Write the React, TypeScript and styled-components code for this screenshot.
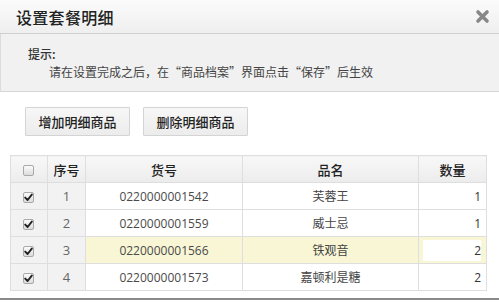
import React from "react";
import styled, { createGlobalStyle, css } from "styled-components";

const GlobalStyle = createGlobalStyle`
  html, body { margin: 0; padding: 0; background: #ffffff; }
  body {
    font-family: "Open Sans", "Noto Sans CJK SC", sans-serif;
    color: #333;
  }
  * { box-sizing: border-box; }
`;

const Dialog = styled.div`
  width: 499px;
  height: 302px;
  overflow: hidden;
  display: flex;
  flex-direction: column;
  background: #fff;
`;

const Header = styled.div`
  height: 34px;
  flex: none;
  display: flex;
  align-items: center;
  justify-content: space-between;
  padding: 0 7px 0 16px;
  background: linear-gradient(#fbfbfb, #efefef);
  border-bottom: 1px solid #cfcfcf;
`;

const Title = styled.h1`
  margin: 0;
  font-family: "Noto Sans CJK SC", sans-serif;
  font-size: 16px;
  font-weight: 500;
  color: #222;
  letter-spacing: 0.3px;
`;

const CloseButton = styled.button`
  width: 20px;
  height: 20px;
  border: 0;
  padding: 0;
  background: transparent;
  display: flex;
  align-items: center;
  justify-content: center;
  cursor: pointer;
`;

const Hint = styled.div`
  height: 58px;
  flex: none;
  background: #f1f1f1;
  border-left: 1px solid #dcdcdc;
  border-bottom: 1px solid #d6d6d6;
  padding: 11px 0 0 27px;
  font-family: "Noto Sans CJK SC", sans-serif;
  font-size: 12px;
  line-height: 18px;
`;

const HintLabel = styled.div`
  color: #333;
  font-weight: 500;
`;

const HintText = styled.div`
  color: #444;
  padding-left: 21px;
`;

const Toolbar = styled.div`
  display: flex;
  gap: 13px;
  padding: 15px 0 0 25px;
  flex: none;
`;

const Button = styled.button`
  width: 105px;
  height: 29px;
  border: 1px solid #d4d4d4;
  border-radius: 1px;
  background: linear-gradient(#f7f7f7, #ececec);
  font-family: "Noto Sans CJK SC", sans-serif;
  font-size: 13px;
  font-weight: 500;
  color: #222;
  padding: 0;
  cursor: pointer;
`;

const TableWrap = styled.div`
  padding: 19px 0 0 10px;
  flex: none;
`;

const Table = styled.table`
  border-collapse: collapse;
  table-layout: fixed;
  width: 476px;
  font-size: 12px;
`;

const Th = styled.th<{ $w: number }>`
  width: ${(p) => p.$w}px;
  height: 27px;
  padding: 0;
  border: 1px solid #dedede;
  background: linear-gradient(#f8f8f8, #ececec);
  font-family: "Noto Sans CJK SC", sans-serif;
  font-size: 13px;
  font-weight: 500;
  color: #222;
  text-align: center;
`;

type Tone = "gray" | "white" | "yellow";

const Td = styled.td<{ $tone: Tone; $align?: "center" | "right" }>`
  height: 27px;
  padding: 0 ${(p) => (p.$align === "right" ? "5px" : "0")} 0 0;
  border: 1px solid #dedede;
  text-align: ${(p) => p.$align ?? "center"};
  color: #4a4a4a;
  font-family: "Open Sans", "Noto Sans CJK SC", sans-serif;
  font-size: 12px;
  ${(p) =>
    p.$tone === "gray" &&
    css`
      background: #f2f2f2;
    `}
  ${(p) =>
    p.$tone === "white" &&
    css`
      background: #ffffff;
    `}
  ${(p) =>
    p.$tone === "yellow" &&
    css`
      background: #f8f6d4;
    `}
`;

const NameText = styled.span`
  font-family: "Noto Sans CJK SC", sans-serif;
  color: #444;
`;

const SeqText = styled.span`
  font-size: 13px;
  color: #666;
`;

const QtyText = styled.span`
  color: #333;
`;

const QtyInput = styled.div`
  margin-left: auto;
  width: 58px;
  height: 21px;
  background: #fff;
  line-height: 21px;
  text-align: right;
  color: #333;
`;

const Box = styled.span`
  display: inline-flex;
  align-items: center;
  justify-content: center;
  width: 11px;
  height: 11px;
  border: 1px solid #a9a9a9;
  border-radius: 2px;
  background: linear-gradient(#fbfbfb, #dcdcdc);
  vertical-align: middle;
  margin-left: -2px;
`;

const BottomRule = styled.div`
  margin-top: 7px;
  height: 2px;
  background: #8a8a8a;
  flex: none;
`;

function Check({ checked }: { checked?: boolean }) {
  return (
    <Box>
      {checked && (
        <svg width="9" height="9" viewBox="0 0 9 9">
          <path d="M1.2 4.6 L3.6 7 L7.8 1.6" fill="none" stroke="#222" strokeWidth="1.9" strokeLinecap="round" strokeLinejoin="round" />
        </svg>
      )}
    </Box>
  );
}

const rows = [
  { seq: 1, code: "0220000001542", name: "芙蓉王", qty: 1 },
  { seq: 2, code: "0220000001559", name: "威士忌", qty: 1 },
  { seq: 3, code: "0220000001566", name: "铁观音", qty: 2, active: true },
  { seq: 4, code: "0220000001573", name: "嘉顿利是糖", qty: 2 },
];

export default function App() {
  return (
    <>
      <GlobalStyle />
      <Dialog>
        <Header>
          <Title>设置套餐明细</Title>
          <CloseButton aria-label="close">
            <svg width="15" height="15" viewBox="0 0 15 15">
              <path d="M3 3 L12 12 M12 3 L3 12" stroke="#888888" strokeWidth="3.6" strokeLinecap="round" />
            </svg>
          </CloseButton>
        </Header>
        <Hint>
          <HintLabel>提示:</HintLabel>
          <HintText>请在设置完成之后，在“商品档案”界面点击“保存”后生效</HintText>
        </Hint>
        <Toolbar>
          <Button>增加明细商品</Button>
          <Button>删除明细商品</Button>
        </Toolbar>
        <TableWrap>
          <Table>
            <thead>
              <tr>
                <Th $w={37}>
                  <Check />
                </Th>
                <Th $w={38}>序号</Th>
                <Th $w={157}>货号</Th>
                <Th $w={176}>品名</Th>
                <Th $w={68}>数量</Th>
              </tr>
            </thead>
            <tbody>
              {rows.map((r) => {
                const tone: Tone = r.active ? "yellow" : "white";
                return (
                  <tr key={r.seq}>
                    <Td $tone="gray">
                      <Check checked />
                    </Td>
                    <Td $tone="gray">
                      <SeqText>{r.seq}</SeqText>
                    </Td>
                    <Td $tone={tone}>{r.code}</Td>
                    <Td $tone={tone}>
                      <NameText>{r.name}</NameText>
                    </Td>
                    <Td $tone={tone} $align="right">
                      {r.active ? <QtyInput>{r.qty}</QtyInput> : <QtyText>{r.qty}</QtyText>}
                    </Td>
                  </tr>
                );
              })}
            </tbody>
          </Table>
        </TableWrap>
        <BottomRule />
      </Dialog>
    </>
  );
}
